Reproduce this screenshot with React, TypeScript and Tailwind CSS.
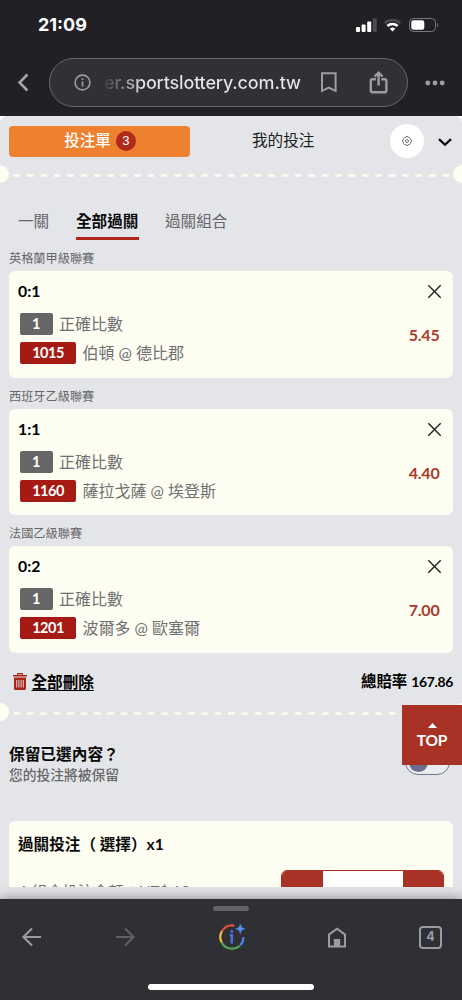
import { FC } from "react";

interface Bet {
    league: string;
    score: string;
    code: string;
    match: string;
    odds: string;
}

const bets: Bet[] = [
    { league: "英格蘭甲級聯賽", score: "0:1", code: "1015", match: "伯頓 @ 德比郡", odds: "5.45" },
    { league: "西班牙乙級聯賽", score: "1:1", code: "1160", match: "薩拉戈薩 @ 埃登斯", odds: "4.40" },
    { league: "法國乙級聯賽", score: "0:2", code: "1201", match: "波爾多 @ 歐塞爾", odds: "7.00" },
];

const StatusBar: FC = () => (
    <div className="flex h-[50px] items-center justify-between pr-[23px] pl-[38px] font-['Inter',sans-serif]">
        <span className="text-[18px] leading-none font-bold text-white">21:09</span>
        <div className="flex items-center">
            <svg width="21" height="14" viewBox="0 0 21 14" fill="#fff">
                <rect x="0" y="9" width="4" height="5" rx="1" />
                <rect x="5.6" y="6.5" width="4" height="7.5" rx="1" />
                <rect x="11.2" y="3.5" width="4" height="10.5" rx="1" />
                <rect x="16.8" y="0.5" width="4" height="13.5" rx="1" fill="#4a4a4f" />
            </svg>
            <svg className="ml-[7px]" width="17" height="14" viewBox="0 0 17 14" fill="none">
                <path d="M.8 5a11.2 11.2 0 0 1 15.4 0" stroke="#4a4a4f" strokeWidth="2.6" />
                <path d="M3.4 8a7.4 7.4 0 0 1 10.2 0" stroke="#fff" strokeWidth="2.5" />
                <path d="M8.5 13.6 5.8 10.8a4 4 0 0 1 5.4 0z" fill="#fff" />
            </svg>
            <svg className="ml-[8px]" width="30" height="14" viewBox="0 0 30 14" fill="none">
                <rect x="0.5" y="0.5" width="26" height="13" rx="3.8" stroke="#77777b" />
                <rect x="2.3" y="2.2" width="13" height="9.6" rx="2.2" fill="#fff" />
                <path d="M28 4.8c1.4.6 1.4 3.8 0 4.4z" fill="#77777b" />
            </svg>
        </div>
    </div>
);

const AddressBar: FC = () => (
    <div className="flex h-[66px] items-start pt-[8px] font-['Inter',sans-serif]">
        <svg className="mt-[15px] ml-[17px]" width="12" height="19" viewBox="0 0 12 19" fill="none" stroke="#a3a5ab" strokeWidth="2.6">
            <path d="M10.4 1.5 2.6 9.5l7.8 8" />
        </svg>
        <div className="ml-[20px] flex h-[49px] w-[359px] items-center rounded-full border border-[#68696d] bg-[#303135] pl-[24px]">
            <svg width="17" height="17" viewBox="0 0 17 17" fill="none" stroke="#9b9da3">
                <circle cx="8.5" cy="8.5" r="7.4" strokeWidth="1.6" />
                <path d="M8.5 7.4v5M8.5 4.2v1.9" strokeWidth="1.7" />
            </svg>
            <span className="ml-[13px] w-[198px] bg-linear-to-r from-[#3b3c40] via-[#e4e5e8] via-20% to-[#e4e5e8] bg-clip-text text-[18px] leading-[24px] font-medium tracking-[-0.16px] whitespace-nowrap text-transparent">
                er.sportslottery.com.tw
            </span>
            <svg className="ml-[18px]" width="18" height="21" viewBox="0 0 18 21" fill="none" stroke="#9b9da3" strokeWidth="2">
                <path d="M2 1.2h13.6v17.6L8.8 15.6 2 18.8z" />
            </svg>
            <svg className="ml-[31px]" width="20" height="23" viewBox="0 0 20 23" fill="none" stroke="#9b9da3" strokeWidth="2.4">
                <path d="M6.8 8.2H3.4a1.6 1.6 0 0 0-1.6 1.6v9.8a1.6 1.6 0 0 0 1.6 1.6h12.4a1.6 1.6 0 0 0 1.6-1.6V9.8a1.6 1.6 0 0 0-1.6-1.6h-3.4" />
                <path d="M9.6 14.5V2M5.6 5.6l4-3.9 4 3.9" />
            </svg>
        </div>
        <svg className="mt-[22px] ml-[17px]" width="20" height="6" viewBox="0 0 20 6" fill="#9b9da3">
            <circle cx="2.8" cy="3" r="2.4" />
            <circle cx="10" cy="3" r="2.4" />
            <circle cx="17.2" cy="3" r="2.4" />
        </svg>
    </div>
);

const TicketDivider: FC = () => (
    <div className="flex h-[18px] items-center justify-between overflow-hidden">
        <div className="-ml-[9px] size-[18px] shrink-0 rounded-full bg-[#fefef0]" />
        <svg className="mt-[3px]" width="436" height="3" viewBox="0 0 436 3">
            <line x1="0.6" y1="1.5" x2="436" y2="1.5" stroke="#fdfdef" strokeWidth="2.6" strokeDasharray="6.6 6.8" />
        </svg>
        <div className="-mr-[9px] size-[18px] shrink-0 rounded-full bg-[#fefef0]" />
    </div>
);

const BetCard: FC<Bet> = ({ league, score, code, match, odds }) => (
    <section className="h-[137.5px]">
        <h2 className="ml-[9px] h-[23px] text-[12.2px] leading-[21px] text-[#66676a]">{league}</h2>
        <div className="mx-[9px] flex h-[106.5px] justify-between rounded-[6px] bg-[#fdfdf1]">
            <div className="pl-[9px]">
                <div className="mt-[10px] h-[20px] text-[15.8px] leading-[20px] font-bold text-black">{score}</div>
                <div className="mt-[12px] ml-[2px] flex h-[22px] items-center">
                    <span className="h-[22px] w-[32.5px] rounded-[2px] bg-[#666666] text-center text-[14.5px] leading-[22px] font-bold text-white">1</span>
                    <span className="ml-[6.5px] text-[16px] leading-[22px] text-[#707173]">正確比數</span>
                </div>
                <div className="mt-[7px] ml-[2px] flex h-[22px] items-center">
                    <span className="h-[22px] w-[56px] rounded-[2px] bg-[#a51b14] text-center text-[14.5px] leading-[22px] font-bold tracking-[-0.5px] text-white">{code}</span>
                    <span className="ml-[6.5px] text-[16px] leading-[22px] whitespace-nowrap text-[#707173]">{match}</span>
                </div>
            </div>
            <div className="flex flex-col items-end">
                <svg className="mt-[13px] mr-[11px]" width="15" height="15" viewBox="0 0 15 15" stroke="#222" strokeWidth="1.4">
                    <path d="M1.3 1.3l12.4 12.4M13.7 1.3 1.3 13.7" />
                </svg>
                <div className="mt-[26px] mr-[13.5px] text-[16px] leading-[20px] font-bold tracking-[-0.2px] text-[#aa3a2e]">{odds}</div>
            </div>
        </div>
    </section>
);

const BottomToolbar: FC = () => (
    <nav className="relative h-[101px] bg-[#2f3034] shadow-[0_0_12px_rgba(0,0,0,0.45)]">
        <div className="flex justify-center pt-[7px]">
            <div className="h-[5px] w-[36px] rounded-full bg-[#626367]" />
        </div>
        <div className="flex h-[52px] items-center pl-[21px]">
            <svg width="21" height="20" viewBox="0 0 21 20" fill="none" stroke="#9b9ba4" strokeWidth="2.1">
                <path d="M20 10H2.6M11 1.4 2.4 10l8.6 8.6" />
            </svg>
            <svg className="ml-[73px]" width="21" height="20" viewBox="0 0 21 20" fill="none" stroke="#5f6065" strokeWidth="2.1">
                <path d="M1 10h17.4M10 1.4l8.6 8.6-8.6 8.6" />
            </svg>
            <svg className="ml-[82px]" width="29" height="28" viewBox="0 0 29 28" fill="none" strokeWidth="2.2">
                <path d="M16.2 2.6A11.6 11.6 0 0 0 4 8" stroke="#e25041" />
                <path d="M4 8a11.6 11.6 0 0 0-.3 11.4" stroke="#f4bd42" />
                <path d="M3.7 19.4A11.6 11.6 0 0 0 21.8 22.7" stroke="#54a65c" />
                <path d="M22.4 22.2A11.6 11.6 0 0 0 25.4 14" stroke="#4b82ec" />
                <path d="M11.8 12.2h2v8.2" stroke="#4b6fe0" strokeWidth="2.6" />
                <circle cx="13.8" cy="8.4" r="1.5" fill="#4b6fe0" />
                <path d="M22.3 1c.8 3.2 1.6 4 4.8 4.8-3.2.8-4 1.6-4.8 4.8-.8-3.2-1.6-4-4.8-4.8 3.2-.8 4-1.6 4.8-4.8z" fill="#5490f5" stroke="#5490f5" strokeWidth="0.5" />
            </svg>
            <svg className="ml-[80px]" width="20" height="21" viewBox="0 0 20 21" fill="none" stroke="#9b9ba4" strokeWidth="2">
                <path d="M2 19.6V7.6L10 1.8l8 5.8v12z" />
                <path d="M6.8 20v-8h6.4v8z" fill="#9b9ba4" stroke="none" />
            </svg>
            <div className="ml-[72px] flex size-[23px] items-center justify-center rounded-[4px] border-2 border-[#9b9ba4] font-['Inter',sans-serif] text-[12.5px] leading-none font-bold text-[#9b9ba4]">
                4
            </div>
        </div>
        <div className="mt-[21px] flex justify-center">
            <div className="h-[6px] w-[166px] rounded-full bg-white" />
        </div>
    </nav>
);

export default function App() {
    return (
        <div className="flex h-[1000px] w-[462px] flex-col overflow-hidden bg-[#212125] font-['Lato','Noto_Sans_CJK_TC',sans-serif]">
            <header className="shrink-0">
                <StatusBar />
                <AddressBar />
            </header>

            <div className="h-[783px] shrink-0 bg-white">
                <main className="h-full rounded-t-[7px] bg-[#e4e5e8]">
                    <div className="h-[771px] overflow-hidden">
                        {/* Tabs */}
                        <div className="flex items-center pt-[8px]">
                            <button className="ml-[9px] flex h-[31px] w-[181px] items-center justify-center rounded-[4px] bg-[#ee8130] text-[15.5px] font-medium text-white">
                                <span className="ml-px">投注單</span>
                                <span className="ml-[5px] flex size-[20px] items-center justify-center rounded-full bg-[#af2a1d] font-['Liberation_Sans',sans-serif] text-[13px]">3</span>
                            </button>
                            <button className="ml-[62px] w-[64px] text-left text-[15.6px] whitespace-nowrap text-[#1d1d1f]">我的投注</button>
                            <div className="ml-[74px] flex size-[34px] items-center justify-center rounded-full bg-white">
                                <svg width="10" height="10" viewBox="0 0 10 10" fill="none" stroke="#555" strokeWidth="0.8">
                                    <path d="M4 .6h2l.3 1 1.1-.4 1.3 1.4-.4 1 1.1.5v1.8l-1.1.5.4 1-1.3 1.4-1.1-.4-.3 1H4l-.3-1-1.1.4-1.3-1.4.4-1L.6 5.9V4.1l1.1-.5-.4-1 1.3-1.4 1.1.4z" />
                                    <circle cx="5" cy="5" r="1.5" />
                                </svg>
                            </div>
                            <svg className="mt-[2px] ml-[14px]" width="14" height="9" viewBox="0 0 14 9" fill="none" stroke="#0a0a0a" strokeWidth="2.3">
                                <path d="M1 1.2l6 5.6 6-5.6" />
                            </svg>
                        </div>

                        <div className="mt-[7px]">
                            <TicketDivider />
                        </div>

                        {/* Parlay type */}
                        <div className="mt-[26px] flex h-[31px] pl-[18px] text-[15.6px] leading-[24px] text-[#66676a]">
                            <span className="w-[58px]">一關</span>
                            <span className="h-[31px] w-[62.5px] border-b-[3px] border-[#b3261e] font-bold text-[#0b0b0c]">全部過關</span>
                            <span className="ml-[26.5px]">過關組合</span>
                        </div>

                        <div className="mt-[8px]">
                            {bets.map((bet) => (
                                <BetCard key={bet.code} {...bet} />
                            ))}
                        </div>

                        {/* Summary */}
                        <div className="mt-[9px] flex h-[24px] items-center justify-between pr-[9px] pl-[13px] font-bold text-black">
                            <button className="flex items-center">
                                <svg width="14" height="17" viewBox="0 0 14 17" fill="#ab2419">
                                    <path d="M0 2h4V1.2C4 .5 4.5 0 5.2 0h3.6C9.5 0 10 .5 10 1.2V2h4v1.5H0zM5.3 2h3.4v-.8H5.3z" fillRule="evenodd" />
                                    <path d="M1 4.5h12v11c0 .8-.6 1.5-1.4 1.5H2.4C1.6 17 1 16.3 1 15.5z" />
                                    <path d="M3.7 7v7.5M5.9 7v7.5M8.1 7v7.5M10.3 7v7.5" stroke="#e4e5e8" strokeWidth="0.9" />
                                </svg>
                                <span className="ml-[4.5px] text-[15.6px] leading-[24px] underline decoration-[1.3px] underline-offset-[2px]">全部刪除</span>
                            </button>
                            <span className="text-[15.4px] leading-[24px]">
                                總賠率<span className="ml-[4px] text-[14px] tracking-[-0.35px]">167.86</span>
                            </span>
                        </div>

                        <div className="mt-[9px]">
                            <TicketDivider />
                        </div>

                        {/* Keep selection */}
                        <div className="relative mt-[21.5px] flex h-[46px] justify-between pl-[9px]">
                            <div>
                                <div className="text-[15.7px] leading-[24px] font-bold text-[#0b0b0c]">保留已選內容？</div>
                                <div className="-mt-px text-[13.75px] leading-[20px] font-medium text-[#66676a]">您的投注將被保留</div>
                            </div>
                            <div className="mt-[7px] mr-[12px] flex h-[26px] w-[45px] items-center rounded-full border border-[#75768f] bg-[#ebecee] pl-[3px]">
                                <div className="size-[19px] rounded-full bg-[#6d6e8c]" />
                            </div>
                            {/* Floating button over the switch */}
                            <button className="absolute -top-[37px] right-0 flex h-[60px] w-[60px] flex-col items-center bg-[#a83226] pt-[18px] text-white">
                                <svg width="9" height="5" viewBox="0 0 9 5" fill="currentColor">
                                    <path d="M4.5 0 9 5H0z" />
                                </svg>
                                <span className="mt-px text-[15.5px] leading-[22px] font-bold tracking-[-0.2px]">TOP</span>
                            </button>
                        </div>

                        {/* Stake */}
                        <div className="mx-[9px] mt-[33px] h-[90px] rounded-[6px] bg-[#fdfdf1] px-[9px]">
                            <div className="pt-[11px] text-[15.6px] leading-[24px] font-bold text-[#0b0b0c]">過關投注（ 選擇）x1</div>
                            <div className="mt-[14px] flex justify-between">
                                <div className="mt-[9px] ml-[1px] text-[15.3px] leading-[24px] whitespace-nowrap text-[#707173]">1 組合投注金額：NT$ 10</div>
                                <div className="flex h-[40px] w-[163px] overflow-hidden rounded-[6px] border border-[#a83226] bg-white">
                                    <div className="w-[41px] bg-[#a83226]" />
                                    <div className="flex-1" />
                                    <div className="w-[40px] bg-[#a83226]" />
                                </div>
                            </div>
                        </div>
                    </div>
                </main>
            </div>

            <BottomToolbar />
        </div>
    );
}
